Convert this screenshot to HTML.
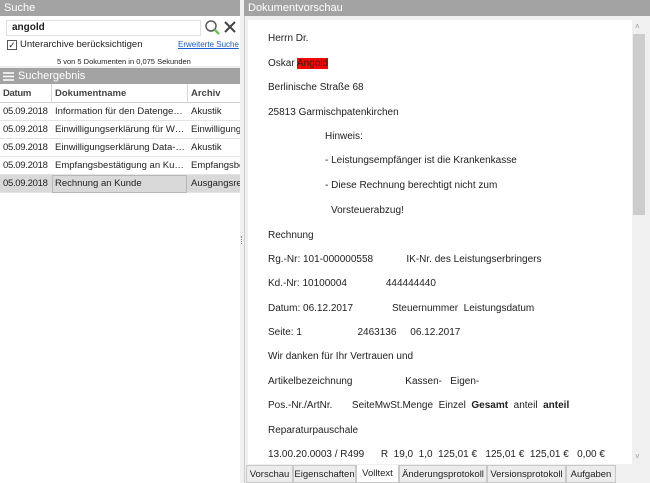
<!DOCTYPE html>
<html><head><meta charset="utf-8"><style>
*{margin:0;padding:0;box-sizing:border-box}
body{width:650px;height:483px;background:#f0f0f0;font-family:"Liberation Sans",sans-serif;font-size:10px;color:#222;position:relative;overflow:hidden}
.hdr{position:absolute;height:16px;background:#a3a3a3;color:#fff;font-size:11px;line-height:16px;padding-left:4px}
.abs{position:absolute}
.row{position:absolute;left:0;width:240px;height:18px;line-height:18px;border-bottom:1px solid #e4e4e4;background:#fff;white-space:nowrap;overflow:hidden;font-size:9.5px}
.row span{position:absolute;top:0;overflow:hidden}
.c1{left:3px;width:48px;letter-spacing:-0.3px}.c2{left:55px;width:131px;text-overflow:ellipsis}.c3{left:191px;width:49px}
.doc div{position:absolute;left:268px;white-space:pre;font-size:10px;color:#222}
.tab{position:absolute;top:465px;height:18px;line-height:17px;border:1px solid #c8c8c8;background:#ececec;font-size:9.5px;text-align:center;white-space:nowrap;overflow:hidden}
</style></head><body>
<div class="hdr" style="left:0;top:0;width:240px">Suche</div>
<div class="abs" style="left:0;top:16px;width:240px;height:50px;background:#fff"></div>
<div class="abs" style="left:6px;top:20px;width:195px;height:16px;border:1px solid #e0e0e0;background:#fff;font-weight:bold;line-height:14px;padding-left:5px">angold</div>
<svg class="abs" style="left:204px;top:19px" width="18" height="18"><circle cx="7" cy="7" r="5" fill="none" stroke="#5a5a5a" stroke-width="1.5"/><line x1="10.5" y1="10.5" x2="15" y2="15" stroke="#6cc24a" stroke-width="2.5"/></svg>
<svg class="abs" style="left:224px;top:21px" width="12" height="12"><path d="M1 1L11 11M11 1L1 11" stroke="#444" stroke-width="2"/></svg>
<div class="abs" style="left:7px;top:40px;width:10px;height:10px;border:1px solid #555;background:#fff;font-size:9px;line-height:8px;text-align:center">✓</div>
<div class="abs" style="left:20px;top:39px;font-size:9.5px">Unterarchive berücksichtigen</div>
<div class="abs" style="left:178px;top:40px;font-size:8px;color:#1a5fd0;text-decoration:underline">Erweiterte Suche</div>
<div class="abs" style="left:57px;top:57px;font-size:7.5px">5 von 5 Dokumenten in 0,075 Sekunden</div>
<div class="hdr" style="left:0;top:68px;width:240px;padding-left:18px">Suchergebnis</div>
<svg class="abs" style="left:3px;top:72px" width="11" height="9"><path d="M0 1H11M0 4.5H11M0 8H11" stroke="#fff" stroke-width="1.4"/></svg>
<div class="abs" style="left:0;top:84px;width:240px;height:399px;background:#fff"></div>
<div class="row" style="top:84px;height:19px;line-height:20px;font-weight:bold;color:#444;border-bottom:1px solid #d0d0d0"><span class="c1">Datum</span><span class="c2">Dokumentname</span><span class="c3">Archiv</span></div>
<div class="abs" style="left:51px;top:84px;width:1px;height:19px;background:#d8d8d8"></div>
<div class="abs" style="left:187px;top:84px;width:1px;height:19px;background:#d8d8d8"></div>
<div class="row" style="top:103px"><span class="c1">05.09.2018</span><span class="c2">Information für den Datengeber</span><span class="c3">Akustik</span></div>
<div class="row" style="top:121px"><span class="c1">05.09.2018</span><span class="c2">Einwilligungserklärung für Werb...</span><span class="c3">Einwilligung</span></div>
<div class="row" style="top:139px"><span class="c1">05.09.2018</span><span class="c2">Einwilligungserklärung Data-Lo...</span><span class="c3">Akustik</span></div>
<div class="row" style="top:157px"><span class="c1">05.09.2018</span><span class="c2">Empfangsbestätigung an Kunde</span><span class="c3">Empfangsbes</span></div>
<div class="row" style="top:175px;background:#d9d9d9"><span class="c1">05.09.2018</span><span class="c2">Rechnung an Kunde</span><span class="c3">Ausgangsrec</span></div>
<div class="abs" style="left:52px;top:175px;width:135px;height:18px;border:1px solid #b8b8b8"></div>

<div class="hdr" style="left:244px;top:0;width:406px">Dokumentvorschau</div>
<div class="abs" style="left:244px;top:16px;width:406px;height:467px;background:#f0f0f0;border-left:1px solid #ccc"></div>
<div class="abs" style="left:248px;top:20px;width:384px;height:444px;background:#fff"></div>
<div class="abs" style="left:632px;top:20px;width:14px;height:444px;background:#f0f0f0"></div>
<div class="abs" style="left:633px;top:34px;width:12px;height:181px;background:#cdcdcd"></div>
<div class="abs" style="left:635px;top:22px;font-size:8px;color:#999">˄</div>
<div class="abs" style="left:635px;top:452px;font-size:8px;color:#999">˅</div>
<div class="doc">
<div style="top:33px">Herrn Dr.</div>
<div style="top:58px">Oskar <span style="background:#f00;color:#222">Angold</span></div>
<div style="top:82px">Berlinische Straße 68</div>
<div style="top:107px">25813 Garmischpatenkirchen</div>
<div style="top:131px;left:325px">Hinweis:</div>
<div style="top:155px;left:325px">- Leistungsempfänger ist die Krankenkasse</div>
<div style="top:180px;left:325px">- Diese Rechnung berechtigt nicht zum</div>
<div style="top:205px;left:331px">Vorsteuerabzug!</div>
<div style="top:230px">Rechnung</div>
<div style="top:254px">Rg.-Nr: 101-000000558            IK-Nr. des Leistungserbringers</div>
<div style="top:278px">Kd.-Nr: 10100004              444444440</div>
<div style="top:303px">Datum: 06.12.2017              Steuernummer  Leistungsdatum</div>
<div style="top:327px">Seite: 1                    2463136     06.12.2017</div>
<div style="top:351px">Wir danken für Ihr Vertrauen und</div>
<div style="top:376px">Artikelbezeichnung                   Kassen-   Eigen-</div>
<div style="top:400px">Pos.-Nr./ArtNr.       SeiteMwSt.Menge  Einzel  <b>Gesamt</b>  anteil  <b>anteil</b></div>
<div style="top:425px">Reparaturpauschale</div>
<div style="top:449px">13.00.20.0003 / R499      R  19,0  1,0  125,01 €   125,01 €  125,01 €   0,00 €</div>
</div>
<div class="tab" style="left:246px;width:47px">Vorschau</div>
<div class="tab" style="left:293px;width:63px">Eigenschaften</div>
<div class="tab" style="left:356px;width:43px;background:#fff;border-top:none">Volltext</div>
<div class="tab" style="left:399px;width:88px">Änderungsprotokoll</div>
<div class="tab" style="left:487px;width:79px">Versionsprotokoll</div>
<div class="tab" style="left:566px;width:50px">Aufgaben</div>
<div class="abs" style="left:241px;top:236px;width:2px;height:8px;border-left:1px dotted #888"></div>
</body></html>
